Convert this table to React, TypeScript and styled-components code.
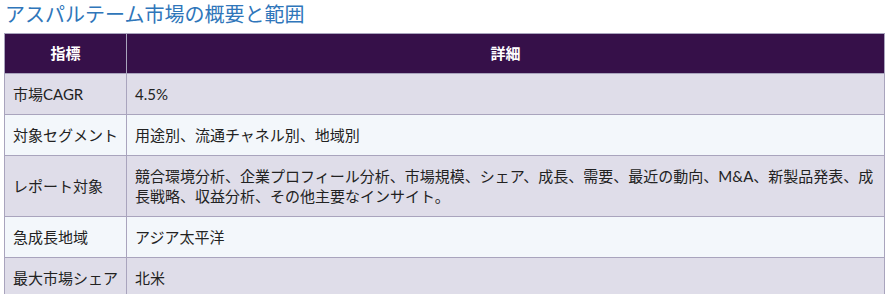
import styled, { createGlobalStyle } from 'styled-components'

const GlobalStyle = createGlobalStyle`
  body {
    margin: 0;
    background: #ffffff;
    font-family: Lato, "Noto Sans CJK JP", sans-serif;
  }
`

const Page = styled.div`
  padding: 0 3px 0 4px;
`

const Title = styled.h2`
  margin: 0;
  padding: 0 0 5px 1px;
  font-size: 20px;
  font-weight: 400;
  line-height: 28px;
  color: #2f76ba;
  font-family: "Noto Sans CJK JP", sans-serif;
`

const Table = styled.table`
  width: 100%;
  border-collapse: collapse;
  font-size: 15px;
  color: #222222;
`

const HeadCell = styled.th`
  background: #361049;
  color: #ffffff;
  font-weight: 700;
  text-align: center;
  padding: 9px 8px 10px;
  line-height: 20px;
  border: 1px solid #a9a4bd;
`

const Row = styled.tr<{ $alt: boolean }>`
  background: ${(p) => (p.$alt ? '#f3f7fb' : '#dfdde9')};
`

const Cell = styled.td`
  padding: 10px 8px;
  line-height: 20px;
  border: 1px solid #a9a4bd;
  vertical-align: middle;
  white-space: nowrap;
`

const DetailCell = styled(Cell)`
  white-space: normal;
`

const rows: [string, string][] = [
  ['市場CAGR', '4.5%'],
  ['対象セグメント', '用途別、流通チャネル別、地域別'],
  [
    'レポート対象',
    '競合環境分析、企業プロフィール分析、市場規模、シェア、成長、需要、最近の動向、M&A、新製品発表、成長戦略、収益分析、その他主要なインサイト。',
  ],
  ['急成長地域', 'アジア太平洋'],
  ['最大市場シェア', '北米'],
]

export default function App() {
  return (
    <Page>
      <GlobalStyle />
      <Title>アスパルテーム市場の概要と範囲</Title>
      <Table>
        <thead>
          <tr>
            <HeadCell>指標</HeadCell>
            <HeadCell>詳細</HeadCell>
          </tr>
        </thead>
        <tbody>
          {rows.map(([k, v], i) => (
            <Row key={k} $alt={i % 2 === 1}>
              <Cell>{k}</Cell>
              <DetailCell>{v}</DetailCell>
            </Row>
          ))}
        </tbody>
      </Table>
    </Page>
  )
}
